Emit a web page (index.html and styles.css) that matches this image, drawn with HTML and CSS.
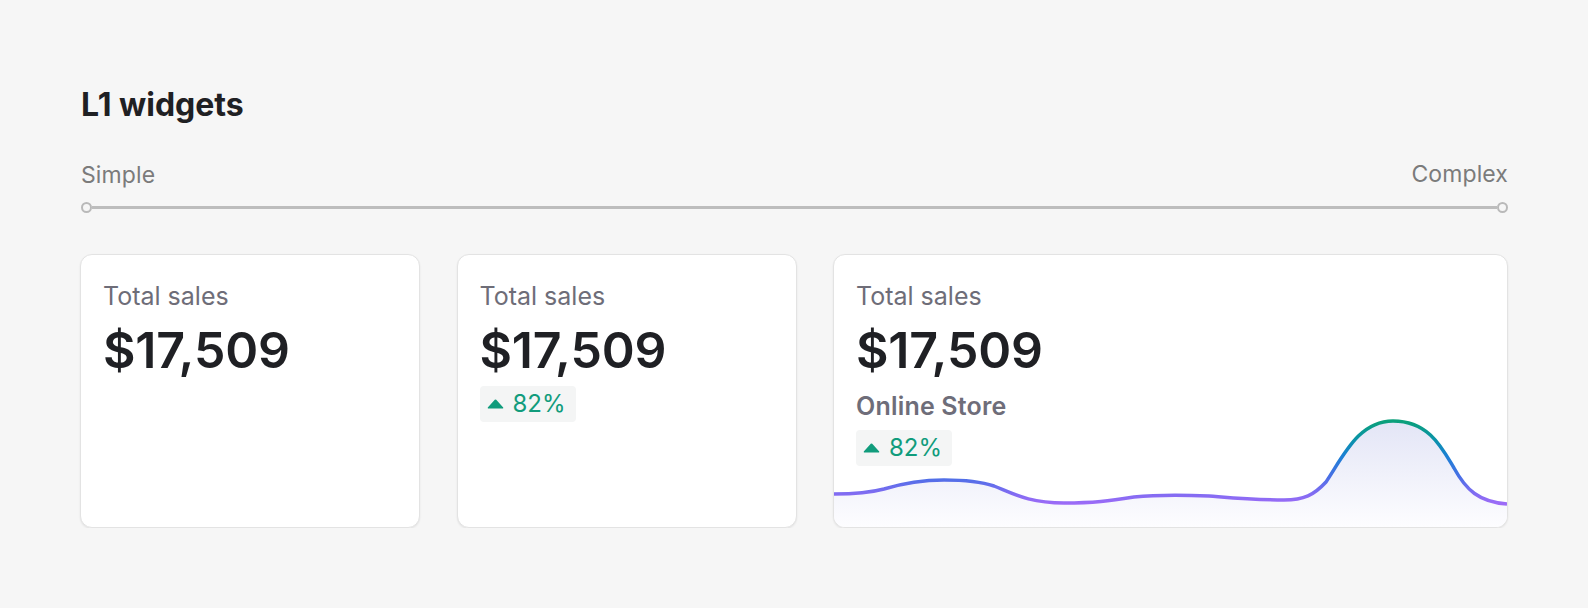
FILE: index.html
```html
<!DOCTYPE html>
<html>
<head>
<meta charset="utf-8">
<link rel="stylesheet" href="styles.css">
</head>
<body>
<main class="page">
  <h1 class="title">L1 widgets</h1>
  <div class="scale">
    <div class="scale-labels"><span>Simple</span><span class="complex">Complex</span></div>
    <div class="scale-track"><span class="dot"></span><span class="line"></span><span class="dot"></span></div>
  </div>
  <div class="cards">
    <section class="card">
      <div class="label">Total sales</div>
      <div class="value">$17,509</div>
    </section>
    <section class="card">
      <div class="label">Total sales</div>
      <div class="value">$17,509</div>
      <div class="badge"><svg class="tri" viewBox="0 0 17 10"><path d="M8.5 0.6 C9.1 0.6 9.5 0.9 9.9 1.4 L16 8.3 C16.6 9 16.2 9.6 15.3 9.6 H1.7 C0.8 9.6 0.4 9 1 8.3 L7.1 1.4 C7.5 0.9 7.9 0.6 8.5 0.6 Z" fill="#119c7c"/></svg><span>82%</span></div>
    </section>
    <section class="card wide">
      <svg class="chart" viewBox="0 0 673 117" preserveAspectRatio="none">
        <defs>
          <linearGradient id="fillg" x1="0" y1="11" x2="0" y2="117" gradientUnits="userSpaceOnUse">
            <stop offset="0" stop-color="#e3e5f6"/>
            <stop offset="1" stop-color="#fdfdff"/>
          </linearGradient>
          <linearGradient id="strokeg" x1="0" y1="11" x2="0" y2="94" gradientUnits="userSpaceOnUse">
            <stop offset="0" stop-color="#0ba07a"/>
            <stop offset="0.22" stop-color="#0a93a8"/>
            <stop offset="0.42" stop-color="#1b80d4"/>
            <stop offset="0.68" stop-color="#4b6fe6"/>
            <stop offset="0.86" stop-color="#7d6cf1"/>
            <stop offset="1" stop-color="#9d6bf7"/>
          </linearGradient>
        </defs>
        <path d="M0 84 C 20 84, 35 83, 50 79 C 70 73, 90 70, 110 70 C 130 70, 145 71, 160 76 C 180 84, 195 93, 230 93 C 260 93, 275 91, 300 87 C 320 85, 350 85, 375 86 C 400 88, 420 90, 450 90 C 470 90, 480 85, 492 72 C 510 45, 525 11, 559 11 C 595 11, 608 38, 620 58 C 632 80, 645 92, 673 94 L 673 117 L 0 117 Z" fill="url(#fillg)"/>
        <path d="M0 84 C 20 84, 35 83, 50 79 C 70 73, 90 70, 110 70 C 130 70, 145 71, 160 76 C 180 84, 195 93, 230 93 C 260 93, 275 91, 300 87 C 320 85, 350 85, 375 86 C 400 88, 420 90, 450 90 C 470 90, 480 85, 492 72 C 510 45, 525 11, 559 11 C 595 11, 608 38, 620 58 C 632 80, 645 92, 673 94" fill="none" stroke="url(#strokeg)" stroke-width="3.5"/>
      </svg>
      <div class="card-body">
        <div class="label">Total sales</div>
        <div class="value">$17,509</div>
        <div class="sub">Online Store</div>
        <div class="badge"><svg class="tri" viewBox="0 0 17 10"><path d="M8.5 0.6 C9.1 0.6 9.5 0.9 9.9 1.4 L16 8.3 C16.6 9 16.2 9.6 15.3 9.6 H1.7 C0.8 9.6 0.4 9 1 8.3 L7.1 1.4 C7.5 0.9 7.9 0.6 8.5 0.6 Z" fill="#119c7c"/></svg><span>82%</span></div>
      </div>
    </section>
  </div>
</main>
</body>
</html>
```
FILE: styles.css
```css
* { box-sizing: border-box; }
html, body { margin: 0; padding: 0; }
body {
  background: #f6f6f6;
  font-family: Inter, "Noto Sans", "Liberation Sans", sans-serif;
  color: #202124;
}
.page {
  width: 1428px;
  margin-left: 80px;
  padding-top: 85px;
}
.title {
  margin: 0 0 0 1px;
  font-size: 32px;
  line-height: 40px;
  font-weight: 700;
  color: #1f2023;
}
.scale { margin-top: 36px; }
.scale-labels {
  display: flex;
  justify-content: space-between;
  padding-left: 1px;
  font-size: 23px;
  line-height: 28px;
  letter-spacing: 0.1px;
  color: #7b7b7b;
}
.scale-labels .complex { position: relative; top: -1px; }
.scale-track {
  display: flex;
  align-items: center;
  margin-top: 13px;
  height: 11px;
  padding-left: 1px;
}
.scale-track .dot {
  width: 11px;
  height: 11px;
  border: 2.5px solid #b9b9b9;
  border-radius: 50%;
  background: #f6f6f6;
  flex: none;
}
.scale-track .line {
  flex: 1;
  height: 3px;
  background: #bdbdbd;
}
.cards {
  display: grid;
  grid-template-columns: 340px 340px 1fr;
  column-gap: 36.5px;
  margin-top: 41px;
}
.card {
  position: relative;
  height: 274px;
  background: #ffffff;
  border: 1px solid #e3e3e3;
  border-radius: 12px;
  box-shadow: 0 1px 2px rgba(0,0,0,0.08);
  overflow: hidden;
  padding: 26px 22px;
}
.card-body { position: relative; }
.chart {
  position: absolute;
  left: 0;
  bottom: 0;
  width: 100%;
  height: 117px;
}
.label {
  font-size: 25px;
  line-height: 30px;
  color: #6e6d78;
}
.value {
  margin-top: 9px;
  font-size: 50px;
  line-height: 60px;
  font-weight: 600;
  letter-spacing: -0.2px;
  color: #1f2024;
}
.sub {
  margin-top: 11px;
  font-size: 25px;
  line-height: 30px;
  font-weight: 600;
  letter-spacing: 0.2px;
  color: #6e6d79;
}
.badge {
  display: inline-flex;
  align-items: center;
  margin-top: 6px;
  height: 36px;
  padding: 0 10px 0 7px;
  background: #f4f5f5;
  border-radius: 4px;
  font-size: 24px;
  line-height: 28px;
  color: #119c7c;
}
.badge span { margin-left: 9px; }
.sub + .badge { margin-top: 9px; }
.tri { width: 17px; height: 10px; display: block; }
```
